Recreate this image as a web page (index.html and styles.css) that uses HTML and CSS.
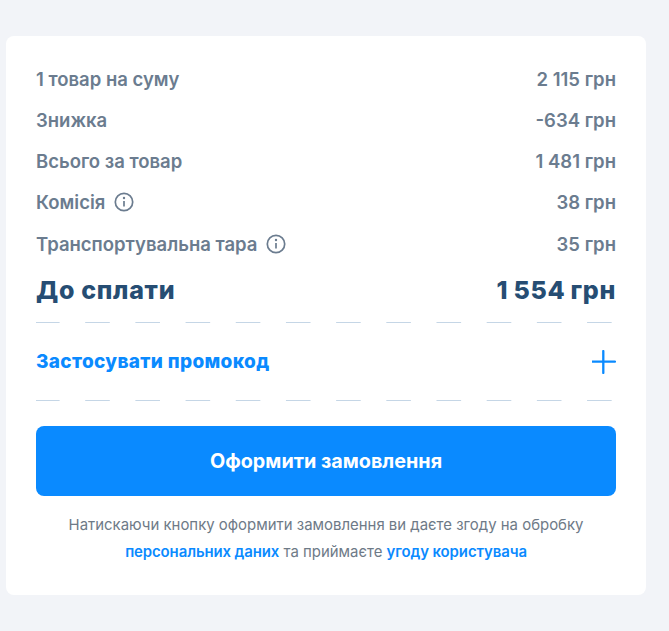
FILE: index.html
```html
<!DOCTYPE html>
<html lang="uk">
<head>
    <meta charset="UTF-8">
    <meta name="viewport" content="width=device-width, initial-scale=1.0">
    <title>Оформлення замовлення</title>
    <link rel="stylesheet" href="styles.css">
</head>
<body>

<div class="card">
    <div class="row">
        <span>1 товар на суму</span>
        <span>2 115 грн</span>
    </div>
    <div class="row">
        <span>Знижка</span>
        <span>-634 грн</span>
    </div>
    <div class="row">
        <span>Всього за товар</span>
        <span>1 481 грн</span>
    </div>
    <div class="row">
        <span class="label-info">Комісія
            <svg class="info" viewBox="0 0 20 20" width="20" height="20">
                <circle cx="10" cy="10" r="8.7"/>
                <path d="M10 9v5.6"/>
                <circle class="dot" cx="10" cy="6" r="1.2"/>
            </svg>
        </span>
        <span>38 грн</span>
    </div>
    <div class="row">
        <span class="label-info">Транспортувальна тара
            <svg class="info" viewBox="0 0 20 20" width="20" height="20">
                <circle cx="10" cy="10" r="8.7"/>
                <path d="M10 9v5.6"/>
                <circle class="dot" cx="10" cy="6" r="1.2"/>
            </svg>
        </span>
        <span>35 грн</span>
    </div>
    <div class="total">
        <span>До сплати</span>
        <span class="total-sum">1 554 грн</span>
    </div>

    <div class="dashes"></div>
    <div class="promo">
        <span>Застосувати промокод</span>
        <svg class="plus" viewBox="0 0 24 24" width="24" height="24">
            <path d="M11.3 1v22M.5 11.6h22.5"/>
        </svg>
    </div>
    <div class="dashes"></div>

    <button class="submit">Оформити замовлення</button>

    <p class="note">
        Натискаючи кнопку оформити замовлення ви даєте згоду на обробку
        <br>
        <a href="#">персональних даних</a> та приймаєте <a href="#">угоду користувача</a>
    </p>
</div>

</body>
</html>
```

FILE: styles.css
```css
/* Global styles */
body {
    font-family: Inter, "Liberation Sans", sans-serif;
    margin: 0;
    padding: 36px 23px 36px 6px;
    background-color: #f2f4f8;
}
.card {
    background-color: #fff;
    border-radius: 8px;
    padding: 22px 30px 29px;
}
.row {
    display: flex;
    justify-content: space-between;
    align-items: center;
    height: 41px;
    font-size: 18.5px;
    font-weight: 600;
    color: #6b7c8f;
}
.row:nth-child(5) {
    height: 42px;
    margin-top: 1px;
}
.label-info {
    display: flex;
    align-items: center;
    gap: 9px;
}
.info {
    fill: none;
    stroke: #6b7c8f;
    stroke-width: 1.7;
}
.info .dot {
    fill: #6b7c8f;
    stroke: none;
}
.total {
    display: flex;
    justify-content: space-between;
    align-items: center;
    height: 50px;
    font-size: 25px;
    font-weight: 800;
    letter-spacing: 0.7px;
    color: #264d73;
    margin-bottom: 7px;
}
.total-sum {
    word-spacing: -1px;
}
.dashes {
    height: 1px;
    background-image: linear-gradient(to right, #c5d6e6 25px, transparent 25px);
    background-size: 50.2px 1px;
    background-position: -1px 0;
    background-repeat: repeat-x;
}
.promo {
    display: flex;
    justify-content: space-between;
    align-items: center;
    height: 77px;
    font-size: 19px;
    font-weight: 800;
    letter-spacing: 0.35px;
    color: #0a8aff;
}
.plus {
    fill: none;
    stroke: #0a8aff;
    stroke-width: 2.3;
    stroke-linecap: round;
}
.submit {
    display: block;
    width: 100%;
    height: 70px;
    margin-top: 25px;
    border: 0;
    border-radius: 8px;
    background-color: #0a8aff;
    color: #fff;
    font-family: inherit;
    font-size: 19.8px;
    font-weight: 700;
    cursor: pointer;
}
.note {
    margin: 16px 0 0;
    text-align: center;
    font-size: 14.95px;
    line-height: 27px;
    color: #6e7a87;
}
.note a {
    color: #0a8aff;
    font-weight: 600;
    letter-spacing: -0.1px;
    text-decoration: none;
}
```
